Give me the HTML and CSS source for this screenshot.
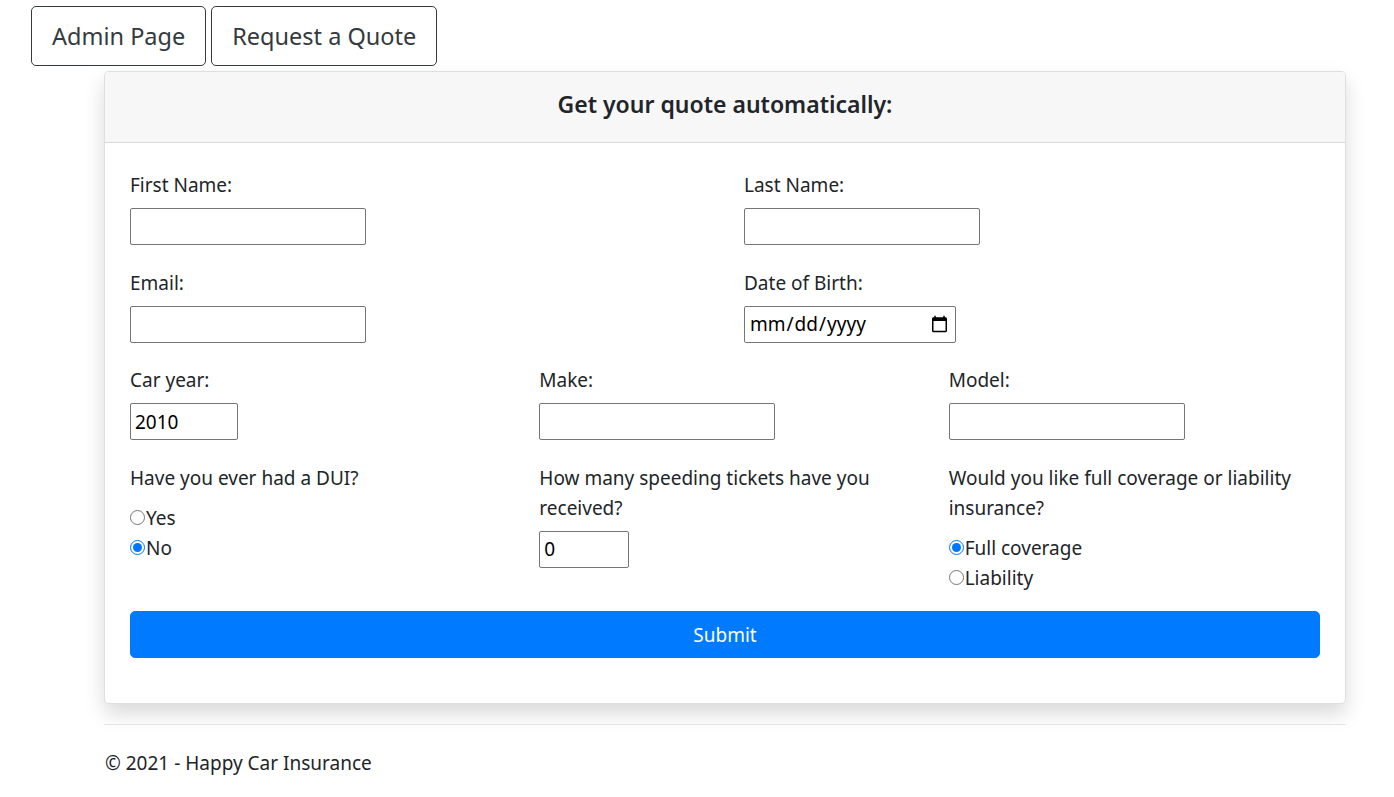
FILE: index.html
```html
<!DOCTYPE html>
<html lang="en">
<head>
<meta charset="utf-8">
<title>Get a Quote - Happy Car Insurance</title>
<link rel="stylesheet" href="styles.css">
</head>
<body>
<nav class="topnav">
  <a class="btn-outline" href="#">Admin Page</a>
  <a class="btn-outline" href="#">Request a Quote</a>
</nav>
<div class="container">
  <div class="card">
    <div class="card-header">
      <h5 class="card-title">Get your quote automatically:</h5>
    </div>
    <form class="card-body">
      <div class="grid two">
        <div class="field">
          <label class="lbl">First Name:</label>
          <input class="inp w-text" type="text">
        </div>
        <div class="field">
          <label class="lbl">Last Name:</label>
          <input class="inp w-text" type="text">
        </div>
        <div class="field">
          <label class="lbl">Email:</label>
          <input class="inp w-text" type="email">
        </div>
        <div class="field">
          <label class="lbl">Date of Birth:</label>
          <input class="inp w-date" type="date">
        </div>
      </div>
      <div class="grid three">
        <div class="field">
          <label class="lbl">Car year:</label>
          <input class="inp w-year" type="number" value="2010">
        </div>
        <div class="field">
          <label class="lbl">Make:</label>
          <input class="inp w-text" type="text">
        </div>
        <div class="field">
          <label class="lbl">Model:</label>
          <input class="inp w-text" type="text">
        </div>
        <div class="field">
          <label class="lbl">Have you ever had a DUI?</label>
          <div class="options">
            <label class="opt"><input class="radio" type="radio" name="dui">Yes</label>
            <label class="opt"><input class="radio" type="radio" name="dui" checked>No</label>
          </div>
        </div>
        <div class="field">
          <label class="lbl">How many speeding tickets have you received?</label>
          <input class="inp w-tickets" type="number" value="0">
        </div>
        <div class="field">
          <label class="lbl">Would you like full coverage or liability insurance?</label>
          <div class="options">
            <label class="opt"><input class="radio" type="radio" name="cov" checked>Full coverage</label>
            <label class="opt"><input class="radio" type="radio" name="cov">Liability</label>
          </div>
        </div>
      </div>
      <button class="submit" type="button">Submit</button>
    </form>
  </div>
  <footer class="footer">
    <div class="footer-text">&copy; 2021 - Happy Car Insurance</div>
  </footer>
</div>
</body>
</html>
```
FILE: styles.css
```css
html, body {
  margin: 0;
  padding: 0;
  background: #fff;
}
body {
  font-family: "Noto Sans", "Open Sans", sans-serif;
  font-size: 19px;
  line-height: 30px;
  color: #212529;
}
.topnav {
  display: flex;
  gap: 5px;
  padding: 6px 0 0 31px;
}
.btn-outline {
  display: inline-block;
  border: 1px solid #343a40;
  border-radius: 5px;
  padding: 10px 20px;
  font-size: 23.5px;
  line-height: 38px;
  color: #343a40;
  text-decoration: none;
}
.container {
  width: 1242px;
  margin: 5px 0 0 104px;
}
.card {
  border: 1px solid rgba(0, 0, 0, 0.125);
  border-radius: 5px;
  background: #fff;
  box-shadow: 0 10px 20px rgba(0, 0, 0, 0.15);
  overflow: hidden;
}
.card-header {
  background: #f7f7f7;
  border-bottom: 1px solid rgba(0, 0, 0, 0.125);
  padding: 17px 20px 23px;
  text-align: center;
}
.card-title {
  margin: 0;
  font-size: 23px;
  line-height: 30px;
  font-weight: 600;
}
.card-body {
  padding: 25px 25px 25px;
  display: block;
}
.grid {
  display: grid;
  column-gap: 38px;
}
.grid.two { grid-template-columns: 1fr 1fr; }
.grid.three { grid-template-columns: 1fr 1fr 1fr; }
.field {
  margin-bottom: 20.5px;
}
.lbl {
  display: block;
  padding-top: 2px;
  margin-bottom: 8px;
}
.inp {
  box-sizing: border-box;
  display: block;
  height: 37px;
  border: 1px solid #767676;
  border-radius: 2px;
  padding: 1px 4px;
  font-family: inherit;
  font-size: 19px;
  color: #000;
  background: #fff;
  margin: 0;
}
.w-text { width: 236px; }
.w-date { width: 212px; }
.w-year { width: 108px; }
.w-tickets { width: 90px; }
.inp[type=number]::-webkit-inner-spin-button,
.inp[type=number]::-webkit-outer-spin-button {
  -webkit-appearance: none;
  margin: 0;
}
.inp[type=number] { -moz-appearance: textfield; }
.options {
  display: flex;
  flex-direction: column;
  padding-top: 2px;
}
.opt {
  display: flex;
  align-items: center;
  line-height: 30px;
}
.radio {
  width: 15px;
  height: 15px;
  margin: 0 1px 0 0;
  accent-color: #0075ff;
}
.submit {
  display: block;
  width: 100%;
  box-sizing: border-box;
  height: 47px;
  border: 1px solid #007bff;
  border-radius: 5px;
  background: #007bff;
  color: #fff;
  font-family: inherit;
  font-size: 19px;
  line-height: 30px;
  padding: 7px 12px;
  margin: -2px 0 20px;
  cursor: pointer;
}
.footer {
  margin-top: 20px;
  border-top: 1px solid #e5e5e5;
}
.footer-text {
  padding: 23px 0 0 1px;
  line-height: 30px;
}
```
